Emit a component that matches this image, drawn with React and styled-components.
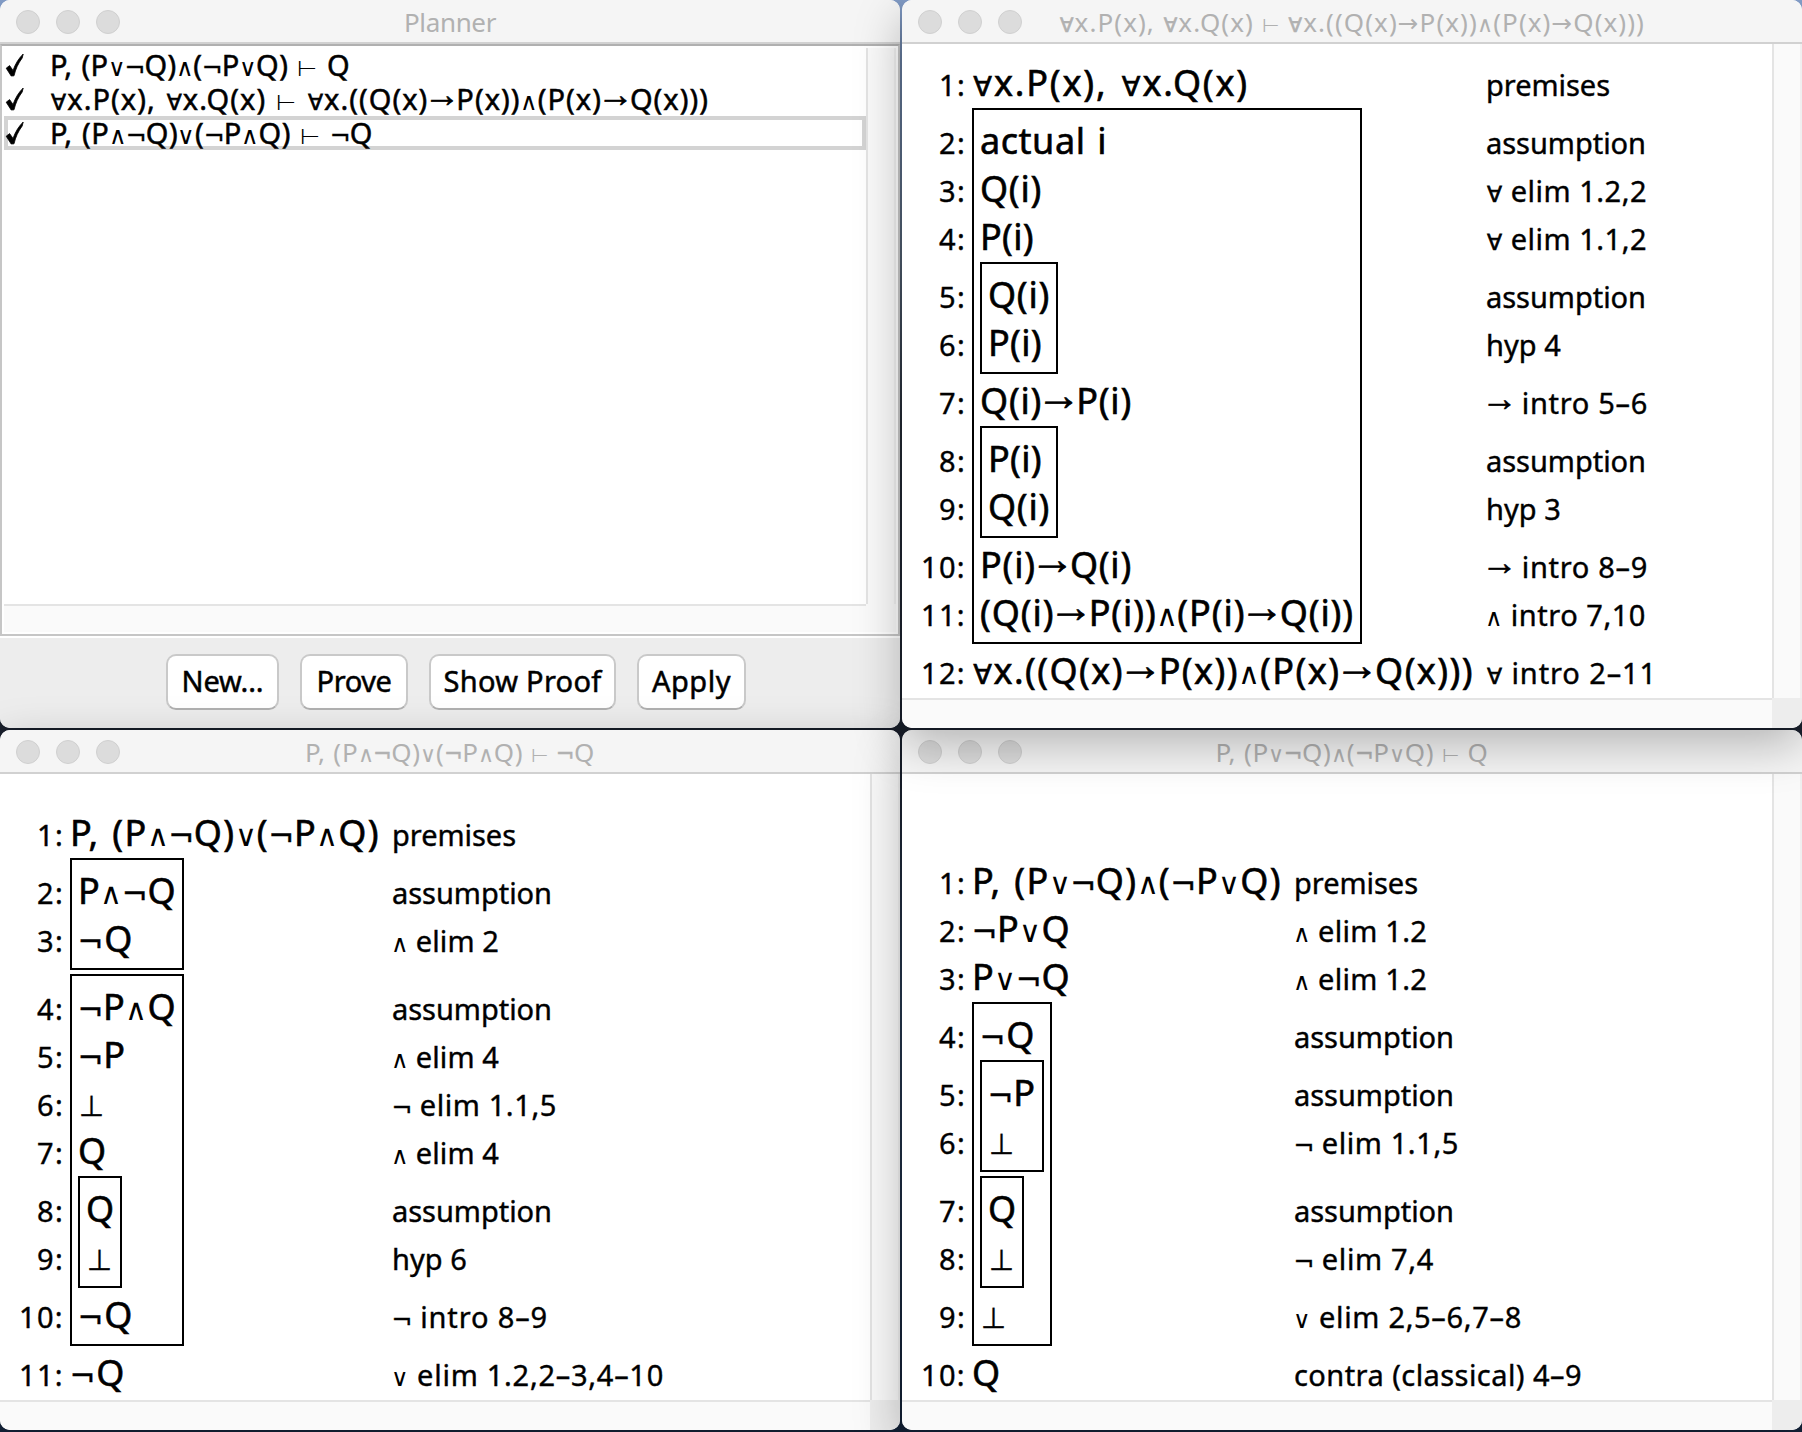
import React, { useLayoutEffect, useRef, useState } from "react";
import styled, { createGlobalStyle } from "styled-components";

const GlobalStyle = createGlobalStyle`
  * { box-sizing: border-box; }
  html, body { margin: 0; padding: 0; }
  body {
    width: 1802px;
    height: 1432px;
    overflow: hidden;
    font-family: "Noto Sans", "DejaVu Sans", sans-serif;
    color: #000;
  }
`;

const Desktop = styled.main`
  display: grid;
  grid-template-columns: 900px 900px;
  grid-template-rows: 728px 700px;
  gap: 2px;
  width: 1802px;
  height: 1432px;
  overflow: hidden;
  background: linear-gradient(180deg, #86a1cd 0, #7088ad 60px, #566578 260px, #262d38 420px, #1b2230 760px, #2a3c55 1000px, #14233a 1432px);
`;

const Window = styled.section`
  position: relative;
  z-index: ${(p) => p.$layer};
  display: flex;
  flex-direction: column;
  border-radius: 10px;
  background: #fff;
  box-shadow: 0 16px 48px rgba(0, 0, 0, 0.27);
`;

const TitleBar = styled.header`
  display: grid;
  grid-template-columns: 120px 1fr 120px;
  flex: none;
  height: 44px;
  padding: 0 16px;
  border-bottom: 2px solid #d1d1d1;
  border-radius: 10px 10px 0 0;
  background: #f5f5f5;
`;

const Lights = styled.div`
  display: flex;
  align-items: center;
  gap: 16px;
  padding-top: 2px;
`;

const Light = styled.span`
  width: 24px;
  height: 24px;
  border: 1.5px solid #d0d0d0;
  border-radius: 50%;
  background: #dcdcdc;
`;

const Title = styled.h1`
  display: flex;
  justify-content: center;
  height: 42px;
  margin: 0;
  font-size: 26px;
  font-weight: 400;
  line-height: 44px;
  white-space: nowrap;
  color: #b1b1b1;
`;

const TextRun = styled.span`
  display: inline-block;
  flex: none;
  white-space: pre;
`;

const SYMBOLS = {
  "∧": { size: 0.84, weight: 200, margin: "0 -0.05em 0 -0.03em" },
  "∨": { size: 0.84, weight: 200, margin: "0 -0.05em 0 -0.03em" },
  "∀": { size: 0.76, weight: 400, stroke: 0.6, margin: "0 0 0 0.05em" },
  "¬": { size: 0.86, weight: 400, stroke: 0.4, margin: "0 -0.06em 0 -0.02em" },
  "→": { size: 1.25, weight: 400, family: "Liberation Sans", raise: 0.08, stroke: 0.6, margin: "0 -0.13em" },
  "⊢": { size: 0.78, weight: 200 },
  "⊥": { size: 0.8, weight: 400, stroke: 0.4, margin: "0 0 0 0.03em" },
};

const OPEN_ARROW = { size: 0.95, weight: 400 };

const Symbol = styled.span`
  position: relative;
  top: ${(p) => -(p.$glyph.raise || 0)}em;
  margin: ${(p) => p.$glyph.margin || 0};
  font-family: "${(p) => p.$glyph.family || "DejaVu Sans"}", "DejaVu Sans", sans-serif;
  font-size: ${(p) => p.$glyph.size}em;
  font-weight: ${(p) => p.$glyph.weight};
  line-height: 0;
  -webkit-text-stroke-width: ${(p) => p.$glyph.stroke || 0}px;
`;

/* Sets a run of logic text so that its advance equals the given width. */
function Logic({ text, width, openArrow }) {
  const ref = useRef(null);
  const [spacing, setSpacing] = useState(0);
  useLayoutEffect(() => {
    const el = ref.current;
    el.style.letterSpacing = "0px";
    const natural = el.getBoundingClientRect().width;
    setSpacing((width - natural) / [...text].length);
  }, [text, width]);
  const parts = text.split(/([∧∨∀¬→⊢⊥])/).filter(Boolean);
  return (
    <TextRun ref={ref} style={{ letterSpacing: `${spacing}px` }}>
      {parts.map((part, i) =>
        SYMBOLS[part] ? (
          <Symbol key={i} $glyph={openArrow && part === "→" ? OPEN_ARROW : SYMBOLS[part]}>
            {part}
          </Symbol>
        ) : (
          part
        )
      )}
    </TextRun>
  );
}

function Frame({ title, titleWidth, layer, children }) {
  return (
    <Window $layer={layer}>
      <TitleBar>
        <Lights>
          <Light />
          <Light />
          <Light />
        </Lights>
        <Title>
          <Logic text={title} width={titleWidth} openArrow />
        </Title>
      </TitleBar>
      {children}
    </Window>
  );
}

/* ---------- Planner ---------- */

const ListPanel = styled.div`
  display: grid;
  grid-template-columns: 862px 30px;
  grid-template-rows: 556px 28px;
  flex: none;
  height: 592px;
  padding: 2px;
  border: 2px solid #c6c6c6;
  border-top-color: #b0b0b0;
  background: #fff;
`;

const List = styled.ul`
  margin: 0;
  padding: 0;
  list-style: none;
`;

const Item = styled.li`
  display: flex;
  height: 34px;
  padding-left: ${(p) => (p.$selected ? 0 : 4)}px;
  border: solid #d3d3d3;
  border-width: ${(p) => (p.$selected ? "4px" : "0")};
  font-size: 29px;
  line-height: 33px;
  word-spacing: 0.04em;
  -webkit-text-stroke: 0.5px #000;
  & > * { margin-top: ${(p) => (p.$selected ? -4 : 0)}px; }
`;

const CheckSlot = styled.span`
  flex: none;
  width: 46px;
  height: 34px;
  margin-left: -4px;
`;

const Track = styled.div`
  border-style: solid;
  border-color: #e4e4e4;
  border-width: ${(p) => (p.$vertical ? "0 0 0 2px" : "2px 0 0")};
  box-shadow: ${(p) => (p.$vertical ? "inset -2px 0 0 #f0f0f0" : "none")};
  background: #fafafa;
`;

const Corner = styled.div`
  background: ${(p) => p.$color};
`;

const Toolbar = styled.div`
  display: flex;
  flex: 1;
  gap: 21px;
  padding: 16px 0 0 166px;
  border-top: 2px solid #fff;
  border-radius: 0 0 10px 10px;
  background: #ededed;
`;

const Button = styled.button`
  display: flex;
  justify-content: center;
  width: ${(p) => p.$width}px;
  height: 56px;
  padding: 0;
  border: 2px solid #c9c9c9;
  border-bottom-color: #b0b0b0;
  border-radius: 10px;
  background: #fff;
  font: 29px/50px "Noto Sans", sans-serif;
  color: #000;
  -webkit-text-stroke: 0.5px #000;
`;

const entries = [
  { text: "P, (P∨¬Q)∧(¬P∨Q) ⊢ Q", width: 300 },
  { text: "∀x.P(x), ∀x.Q(x) ⊢ ∀x.((Q(x)→P(x))∧(P(x)→Q(x)))", width: 659 },
  { text: "P, (P∧¬Q)∨(¬P∧Q) ⊢ ¬Q", width: 323, selected: true },
];

const buttons = [
  { label: "New...", width: 113, text: 82 },
  { label: "Prove", width: 108, text: 75 },
  { label: "Show Proof", width: 187, text: 158 },
  { label: "Apply", width: 109, text: 79 },
];

function Tick() {
  return (
    <svg width="24" height="34" viewBox="0 0 24 34">
      <path d="M2.2 20.2 L5.6 17.6 L9 22.4 C11.6 15.5 14.6 10.5 19.2 6 L18.2 10 C14.1 15.5 11.6 21 10 27.8 L7.2 28 Z" fill="#000" stroke="#000" strokeWidth="0.8" strokeLinejoin="round" />
    </svg>
  );
}

function Planner() {
  return (
    <Frame title="Planner" titleWidth={92} layer={1}>
      <ListPanel>
        <List>
          {entries.map((e) => (
            <Item key={e.text} $selected={e.selected}>
              <CheckSlot>
                <Tick />
              </CheckSlot>
              <Logic text={e.text} width={e.width} />
            </Item>
          ))}
        </List>
        <Track $vertical />
        <Track />
        <Corner $color="#fafafa" />
      </ListPanel>
      <Toolbar>
        {buttons.map((b) => (
          <Button key={b.label} $width={b.width}>
            <Logic text={b.label} width={b.text} />
          </Button>
        ))}
      </Toolbar>
    </Frame>
  );
}

/* ---------- Proofs ---------- */

const Viewport = styled.div`
  display: grid;
  grid-template-columns: 870px 30px;
  grid-template-rows: 1fr 30px;
  flex: 1;
  border-radius: 0 0 10px 10px;
  overflow: hidden;
`;

const Sheet = styled.div`
  display: flex;
  align-items: flex-end;
  padding: 0 0 2px 20px;
`;

const Column = styled.div`
  display: flex;
  flex-direction: column;
  align-items: ${(p) => (p.$end ? "flex-end" : "flex-start")};
  flex: none;
  width: ${(p) => (p.$width ? `${p.$width}px` : "auto")};
  margin-right: ${(p) => p.$gap || 0}px;
`;

const Note = styled.div`
  height: 48px;
  margin-top: ${(p) => p.$lead}px;
  font-size: 29px;
  line-height: 50px;
  -webkit-text-stroke: 0.4px #000;
`;

const Formula = styled.div`
  height: 48px;
  font-size: 36px;
  line-height: 46px;
  white-space: nowrap;
  word-spacing: 0.05em;
  -webkit-text-stroke: 0.6px #000;
`;

const Box = styled.div`
  display: flex;
  flex-direction: column;
  align-items: flex-start;
  width: ${(p) => (p.$width ? `${p.$width}px` : "auto")};
  margin-bottom: 4px;
  padding: 8px 6px 4px;
  border: 2px solid #000;
`;

/* A proof is a tree: a line is [formula, width, reason, reasonWidth], a box is { lines }. */
function Steps({ nodes }) {
  return nodes.map((n, i) =>
    Array.isArray(n) ? (
      <Formula key={i}>
        <Logic text={n[0]} width={n[1]} />
      </Formula>
    ) : (
      <Box key={i} $width={n.width}>
        <Steps nodes={n.lines} />
      </Box>
    )
  );
}

function flatten(nodes, state = { lead: 0, out: [] }) {
  nodes.forEach((n) => {
    if (Array.isArray(n)) {
      state.out.push({ reason: n[2], width: n[3], lead: state.lead });
      state.lead = 0;
    } else {
      state.lead += 10;
      flatten(n.lines, state);
      state.lead += 10;
    }
  });
  return state.out;
}

function Proof({ title, titleWidth, layer, steps, formulaWidth }) {
  const notes = flatten(steps);
  return (
    <Frame title={title} titleWidth={titleWidth} layer={layer}>
      <Viewport>
        <Sheet>
          <Column $end $width={44} $gap={6}>
            {notes.map((n, i) => (
              <Note key={i} $lead={n.lead}>
                <Logic text={`${i + 1}:`} width={i < 9 ? 27 : 45} />
              </Note>
            ))}
          </Column>
          <Column $width={formulaWidth} $gap={12}>
            <Steps nodes={steps} />
          </Column>
          <Column>
            {notes.map((n, i) => (
              <Note key={i} $lead={n.lead}>
                <Logic text={n.reason} width={n.width} />
              </Note>
            ))}
          </Column>
        </Sheet>
        <Track $vertical />
        <Track />
        <Corner $color="#ededed" />
      </Viewport>
    </Frame>
  );
}

const quantified = [
  ["∀x.P(x), ∀x.Q(x)", 277, "premises", 124],
  {
    width: 390,
    lines: [
      ["actual i", 127, "assumption", 160],
      ["Q(i)", 62, "∀ elim 1.2,2", 161],
      ["P(i)", 54, "∀ elim 1.1,2", 161],
      { width: 78, lines: [["Q(i)", 62, "assumption", 160], ["P(i)", 54, "hyp 4", 75]] },
      ["Q(i)→P(i)", 152, "→ intro 5–6", 162],
      { width: 78, lines: [["P(i)", 54, "assumption", 160], ["Q(i)", 62, "hyp 3", 75]] },
      ["P(i)→Q(i)", 152, "→ intro 8–9", 162],
      ["(Q(i)→P(i))∧(P(i)→Q(i))", 374, "∧ intro 7,10", 160],
    ],
  },
  ["∀x.((Q(x)→P(x))∧(P(x)→Q(x)))", 502, "∀ intro 2–11", 171],
];

const disjunctive = [
  ["P, (P∧¬Q)∨(¬P∧Q)", 310, "premises", 124],
  { width: 114, lines: [["P∧¬Q", 99, "assumption", 160], ["¬Q", 57, "∧ elim 2", 107]] },
  {
    width: 114,
    lines: [
      ["¬P∧Q", 99, "assumption", 160],
      ["¬P", 49, "∧ elim 4", 107],
      ["⊥", 28, "¬ elim 1.1,5", 165],
      ["Q", 28, "∧ elim 4", 107],
      { width: 44, lines: [["Q", 28, "assumption", 160], ["⊥", 28, "hyp 6", 75]] },
      ["¬Q", 57, "¬ intro 8–9", 156],
    ],
  },
  ["¬Q", 57, "∨ elim 1.2,2–3,4–10", 272],
];

const conjunctive = [
  ["P, (P∨¬Q)∧(¬P∨Q)", 310, "premises", 124],
  ["¬P∨Q", 99, "∧ elim 1.2", 133],
  ["P∨¬Q", 99, "∧ elim 1.2", 133],
  {
    width: 80,
    lines: [
      ["¬Q", 57, "assumption", 160],
      { width: 64, lines: [["¬P", 49, "assumption", 160], ["⊥", 28, "¬ elim 1.1,5", 165]] },
      { width: 44, lines: [["Q", 28, "assumption", 160], ["⊥", 28, "¬ elim 7,4", 140]] },
      ["⊥", 28, "∨ elim 2,5–6,7–8", 228],
    ],
  },
  ["Q", 28, "contra (classical) 4–9", 288],
];

export default function App() {
  return (
    <>
      <GlobalStyle />
      <Desktop>
        <Planner />
        <Proof
          title="∀x.P(x), ∀x.Q(x) ⊢ ∀x.((Q(x)→P(x))∧(P(x)→Q(x)))"
          titleWidth={586}
          layer={4}
          steps={quantified}
          formulaWidth={502}
        />
        <Proof
          title="P, (P∧¬Q)∨(¬P∧Q) ⊢ ¬Q"
          titleWidth={290}
          layer={2}
          steps={disjunctive}
          formulaWidth={310}
        />
        <Proof
          title="P, (P∨¬Q)∧(¬P∨Q) ⊢ Q"
          titleWidth={273}
          layer={3}
          steps={conjunctive}
          formulaWidth={310}
        />
      </Desktop>
    </>
  );
}
